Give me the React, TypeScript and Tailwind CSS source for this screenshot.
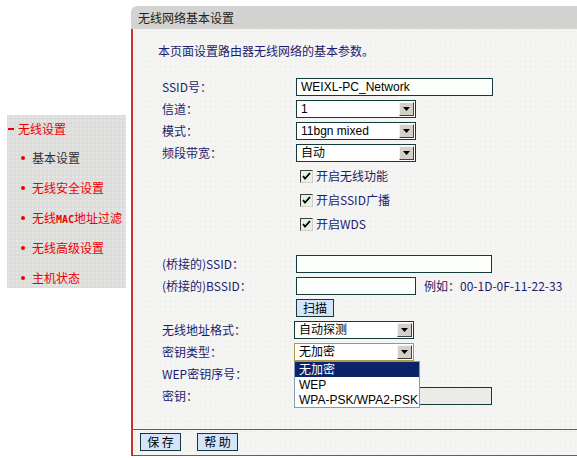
import React from "react";

const CJK = "font-['Noto_Sans_CJK_SC',sans-serif]";
const SANS = "font-['Liberation_Sans','Noto_Sans_CJK_SC',sans-serif]";

function Arrow() {
  return (
    <span className="mr-[1px] flex h-[14px] w-[15px] shrink-0 items-center justify-center border border-t-[#f4f4f4] border-l-[#f4f4f4] border-r-[#404040] border-b-[#404040] bg-[#d4d0c8]">
      <svg width="7" height="4" viewBox="0 0 7 4">
        <path d="M0 0h7L3.5 4z" fill="#000" />
      </svg>
    </span>
  );
}

function Select({ value, focus = false }: { value: string; focus?: boolean }) {
  return (
    <div
      className={`flex h-[18px] w-[120px] items-center border bg-white ${
        focus ? "border-[#b39546]" : "border-[#133a3a]"
      }`}
    >
      <span className={`flex-1 pl-[4px] text-[12px] leading-none text-black ${SANS}`}>{value}</span>
      <Arrow />
    </div>
  );
}

function Input({ w, value = "", disabled = false }: { w: string; value?: string; disabled?: boolean }) {
  return (
    <div
      className={`flex h-[18px] items-center border border-[#133a3a] ${w} ${
        disabled ? "bg-[#ecebe6]" : "bg-[#fcfffc]"
      }`}
    >
      <span className={`pl-[4px] text-[12px] leading-none text-black ${SANS}`}>{value}</span>
    </div>
  );
}

function Check({ label }: { label: string }) {
  return (
    <div className="flex items-center">
      <span className="ml-[4px] flex h-[13px] w-[13px] items-center justify-center border border-t-[#404040] border-l-[#404040] border-r-[#d4d0c8] border-b-[#d4d0c8] bg-[#e2f4e2]">
        <svg width="9" height="9" viewBox="0 0 9 9">
          <path d="M1 4l2 2.5L8 1" stroke="#000" strokeWidth="1.8" fill="none" />
        </svg>
      </span>
      <span className="ml-[3px] text-[12px] text-[#1c1c6e]">{label}</span>
    </div>
  );
}

function Row({ label, children, h = "h-[22px]" }: { label?: string; children?: React.ReactNode; h?: string }) {
  return (
    <div className={`flex items-center ${h}`}>
      <div className="w-[134px] shrink-0 whitespace-nowrap text-[12px] leading-none text-[#1c1c6e]">{label}</div>
      <div className="flex items-center">{children}</div>
    </div>
  );
}

function Btn({ label, w }: { label: string; w: string }) {
  return (
    <div
      className={`flex h-[18px] items-center justify-center border border-[#133a3a] bg-[#d4e4fa] text-[12px] leading-none text-black ${w}`}
    >
      {label}
    </div>
  );
}

function SideItem({ children, active = false }: { children: React.ReactNode; active?: boolean }) {
  return (
    <div className="flex h-[30px] items-center">
      <span className="ml-[14px] h-[4px] w-[4px] rounded-full bg-[#ee0000]" />
      <span
        className={`ml-[7px] whitespace-nowrap text-[12px] leading-none ${
          active ? "text-[#333333]" : "text-[#ee0000]"
        }`}
      >
        {children}
      </span>
    </div>
  );
}

export default function App() {
  return (
    <div className={`flex h-[458px] w-[577px] overflow-hidden bg-white ${CJK}`}>
      {/* sidebar */}
      <div className="w-[131px] shrink-0 pt-[115px]">
        <div className="ml-[7px] h-[173px] w-[119px] overflow-hidden bg-[#dcdcda] bg-[radial-gradient(circle,#e6e6e4_0.7px,transparent_1px)] bg-[length:4px_4px]">
          <div className="flex h-[28px] items-center">
            <span className="ml-[1px] h-[2px] w-[6px] bg-[#ee0000]" />
            <span className="ml-[4px] text-[12px] leading-none text-[#ee0000]">无线设置</span>
          </div>
          <SideItem active>基本设置</SideItem>
          <SideItem>无线安全设置</SideItem>
          <SideItem>
            无线<span className="font-['DejaVu_Sans_Mono',monospace] text-[10px] font-bold">MAC</span>地址过滤
          </SideItem>
          <SideItem>无线高级设置</SideItem>
          <SideItem>主机状态</SideItem>
        </div>
      </div>

      {/* main panel */}
      <div className="flex-1 pt-[6px]">
        <div className="flex h-[23px] items-center rounded-tl-[6px] bg-[#d3d3d1] pl-[7px] text-[12px] leading-none text-[#222222]">
          无线网络基本设置
        </div>
        <div className="flex h-[427px] flex-col border-b border-l-2 border-[#c8352d] bg-[#f4f4f2] bg-[radial-gradient(circle,#e8e8e5_0.7px,transparent_1px)] bg-[length:5px_5px]">
          <div className="h-[400px]">
            <div className="ml-[25px] mt-[14px] flex h-[16px] items-center text-[12px] leading-none text-[#1c1c6e]">
              本页面设置路由器无线网络的基本参数。
            </div>
            <div className="ml-[29px] mt-[17px]">
              <Row label="SSID号：">
                <Input w="w-[197px]" value="WEIXL-PC_Network" />
              </Row>
              <Row label="信道：">
                <Select value="1" />
              </Row>
              <Row label="模式：">
                <Select value="11bgn mixed" />
              </Row>
              <Row label="频段带宽：">
                <Select value="自动" />
              </Row>
              <Row h="h-[24px]">
                <Check label="开启无线功能" />
              </Row>
              <Row h="h-[24px]">
                <Check label="开启SSID广播" />
              </Row>
              <Row h="h-[24px]">
                <Check label="开启WDS" />
              </Row>
              <div className="h-[17px]" />
              <Row label="(桥接的)SSID：">
                <Input w="w-[196px]" />
              </Row>
              <Row label="(桥接的)BSSID：">
                <Input w="w-[120px]" />
                <span className="ml-[8px] text-[12px] leading-none text-[#1c1c6e]">例如：00-1D-0F-11-22-33</span>
              </Row>
              <Row>
                <Btn label="扫描" w="w-[38px]" />
              </Row>
              <Row label="无线地址格式：">
                <div className="ml-[-2px]">
                  <Select value="自动探测" />
                </div>
              </Row>
              <Row label="密钥类型：">
                <div className="relative ml-[-2px]">
                  <Select value="无加密" focus />
                  <div
                    className={`absolute left-0 top-[18px] z-10 flex w-[126px] flex-col border border-[#7f9db9] bg-white text-[12px] leading-none text-black ${SANS}`}
                  >
                    <div className="flex h-[15px] items-center bg-[#0a246a] pl-[4px] text-white">无加密</div>
                    <div className="flex h-[15px] items-center pl-[4px]">WEP</div>
                    <div className="flex h-[15px] items-center pl-[4px]">WPA-PSK/WPA2-PSK</div>
                  </div>
                </div>
              </Row>
              <Row label="WEP密钥序号：" />
              <Row label="密钥：">
                <Input w="w-[196px]" disabled />
              </Row>
            </div>
          </div>
          <div className="h-[1px] bg-[#c8352d]" />
          <div className="flex gap-[16px] pl-[7px] pt-[3px]">
            <Btn label="保 存" w="w-[41px]" />
            <Btn label="帮 助" w="w-[41px]" />
          </div>
        </div>
      </div>
    </div>
  );
}
